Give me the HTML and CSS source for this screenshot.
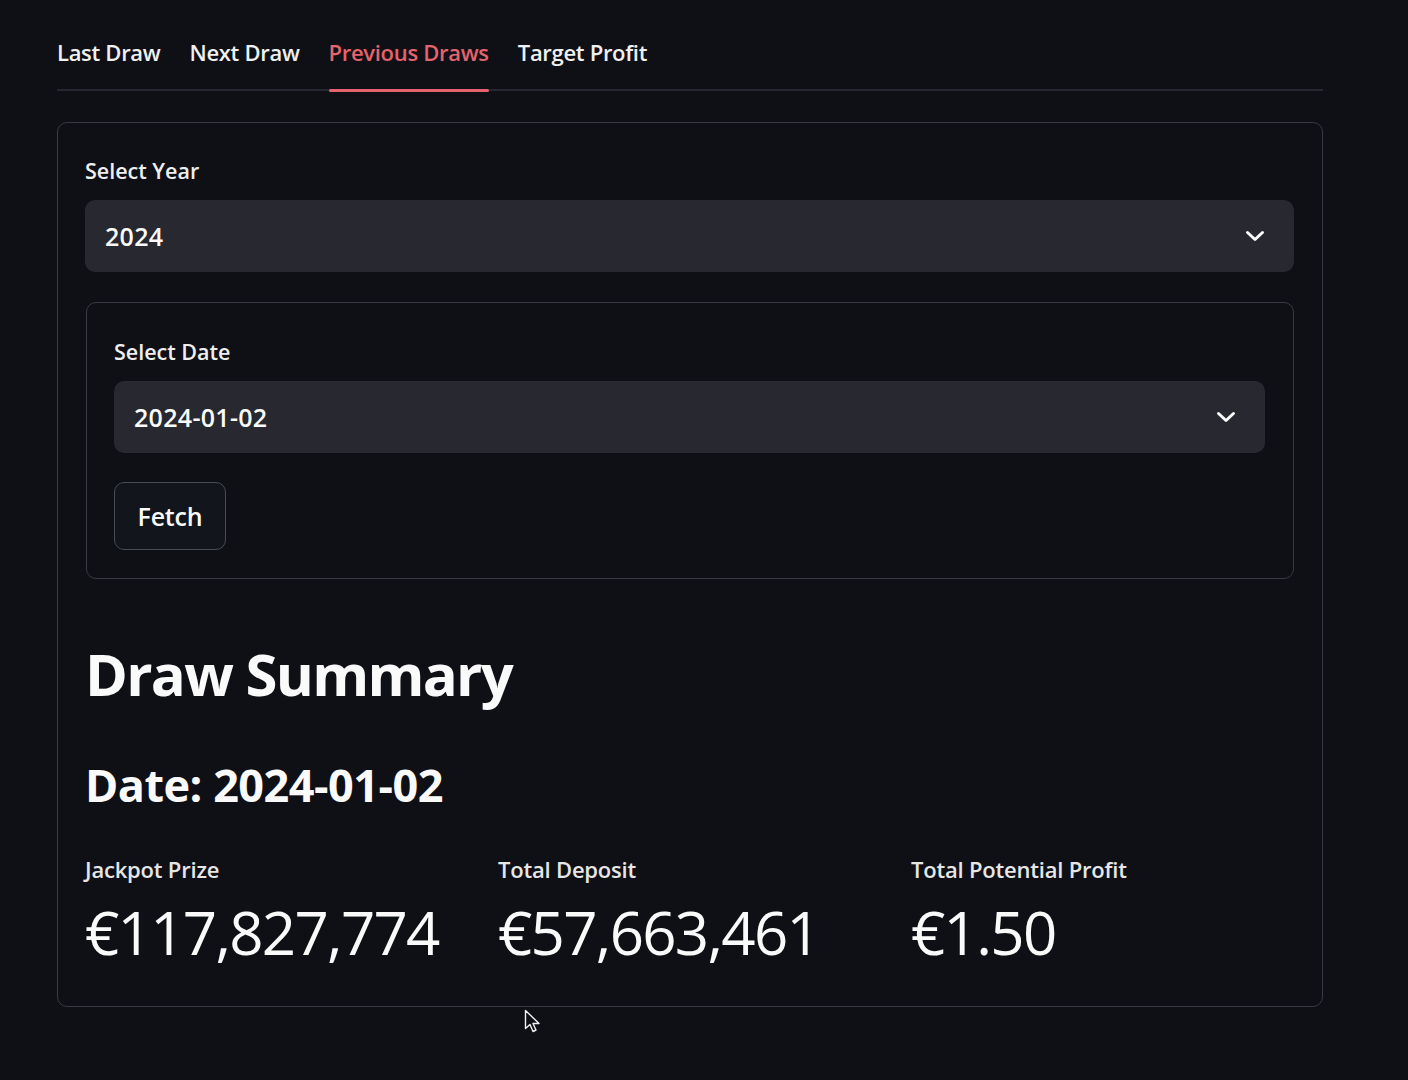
FILE: index.html
```html
<!DOCTYPE html>
<html lang="en">
<head>
<meta charset="utf-8">
<title>Previous Draws</title>
<link rel="stylesheet" href="styles.css">
</head>
<body>
<main class="page">
  <nav class="tabs">
    <div class="tab">Last Draw</div>
    <div class="tab">Next Draw</div>
    <div class="tab active">Previous Draws</div>
    <div class="tab">Target Profit</div>
  </nav>

  <section class="panel">
    <div class="field">
      <div class="label">Select Year</div>
      <div class="select">
        <span>2024</span>
        <svg class="chev" width="20" height="12" viewBox="0 0 20 12"><path d="M2.5 2.5 L10 9.5 L17.5 2.5" fill="none" stroke="#fafafa" stroke-width="3" stroke-linecap="round" stroke-linejoin="round"/></svg>
      </div>
    </div>

    <div class="form">
      <div class="field">
        <div class="label">Select Date</div>
        <div class="select">
          <span>2024-01-02</span>
          <svg class="chev" width="20" height="12" viewBox="0 0 20 12"><path d="M2.5 2.5 L10 9.5 L17.5 2.5" fill="none" stroke="#fafafa" stroke-width="3" stroke-linecap="round" stroke-linejoin="round"/></svg>
        </div>
      </div>
      <button class="btn">Fetch</button>
    </div>

    <h1 class="h1">Draw Summary</h1>
    <h2 class="h2">Date: 2024-01-02</h2>

    <div class="metrics">
      <div class="metric">
        <div class="m-label">Jackpot Prize</div>
        <div class="m-value">€117,827,774</div>
      </div>
      <div class="metric">
        <div class="m-label">Total Deposit</div>
        <div class="m-value">€57,663,461</div>
      </div>
      <div class="metric">
        <div class="m-label">Total Potential Profit</div>
        <div class="m-value">€1.50</div>
      </div>
    </div>
  </section>
</main>
<svg class="cursor" width="18" height="26" viewBox="0 0 18 26"><path d="M1.5 1.5 L1.5 19.5 L6 15.5 L9 22.5 L12 21 L9 14.5 L15 14.5 Z" fill="#0e1016" stroke="#f0f0f0" stroke-width="1.4" stroke-linejoin="round"/></svg>
</body>
</html>
```

FILE: styles.css
```css
* { box-sizing: border-box; }
html, body { margin: 0; padding: 0; }
body {
  background: #0e1016;
  color: #fafafa;
  font-family: "Open Sans", "Noto Sans", sans-serif;
  width: 1408px;
  height: 1080px;
  overflow: hidden;
  position: relative;
}
.page {
  padding: 0 85px 0 57px;
}
.tabs {
  display: flex;
  gap: 29px;
  border-bottom: 2px solid #262730;
  height: 91px;
}
.tab {
  position: relative;
  font-size: 22px;
  line-height: 30px;
  padding-top: 37px;
  font-weight: 600;
  letter-spacing: -0.3px;
  color: #f0f0f0;
}
.tab.active { color: #e4636c; }
.tab.active::after {
  content: "";
  position: absolute;
  left: 0; right: 0;
  bottom: -3px;
  height: 3px;
  border-radius: 2px;
  background: #e4636c;
}
.panel {
  margin-top: 31px;
  border: 1px solid #3a3b42;
  border-radius: 10px;
  padding: 34px 28px 0 27px;
  height: 885px;
}
.label {
  font-size: 21.5px;
  line-height: 28px;
  font-weight: 600;
  letter-spacing: 0;
  color: #eeeeee;
}
.select {
  margin-top: 15px;
  height: 72px;
  background: #272830;
  border-radius: 10px;
  display: flex;
  align-items: center;
  justify-content: space-between;
  padding: 0 29px 0 20px;
  font-size: 25px;
  font-weight: 600;
  letter-spacing: 0.3px;
}
.chev { display: block; }
.form {
  margin-top: 30px;
  margin-left: 1px;
  border: 1px solid #3a3b42;
  border-radius: 10px;
  padding: 35px 28px 28px 27px;
}
.btn {
  margin-top: 29px;
  width: 112px;
  height: 68px;
  background: #13151c;
  border: 1px solid #4a4b53;
  border-radius: 10px;
  color: #fafafa;
  font-family: inherit;
  font-size: 25px;
  font-weight: 600;
  letter-spacing: -0.2px;
  padding: 0;
}
.h1 {
  margin: 55px 0 0 0;
  font-size: 58px;
  line-height: 80px;
  font-weight: 700;
  letter-spacing: -1.7px;
}
.h2 {
  margin: 43px 0 0 0;
  font-size: 45px;
  line-height: 56px;
  font-weight: 700;
  letter-spacing: -0.5px;
}
.metrics {
  margin-top: 41px;
  display: grid;
  grid-template-columns: repeat(3, 1fr);
  gap: 30px;
}
.m-label {
  font-size: 22px;
  line-height: 30px;
  font-weight: 600;
  letter-spacing: -0.2px;
  color: #e6e6e6;
}
.m-value {
  margin-top: 12px;
  font-size: 60px;
  line-height: 72px;
  letter-spacing: -1.7px;
}
.cursor {
  position: absolute;
  left: 524px;
  top: 1009px;
}
```
